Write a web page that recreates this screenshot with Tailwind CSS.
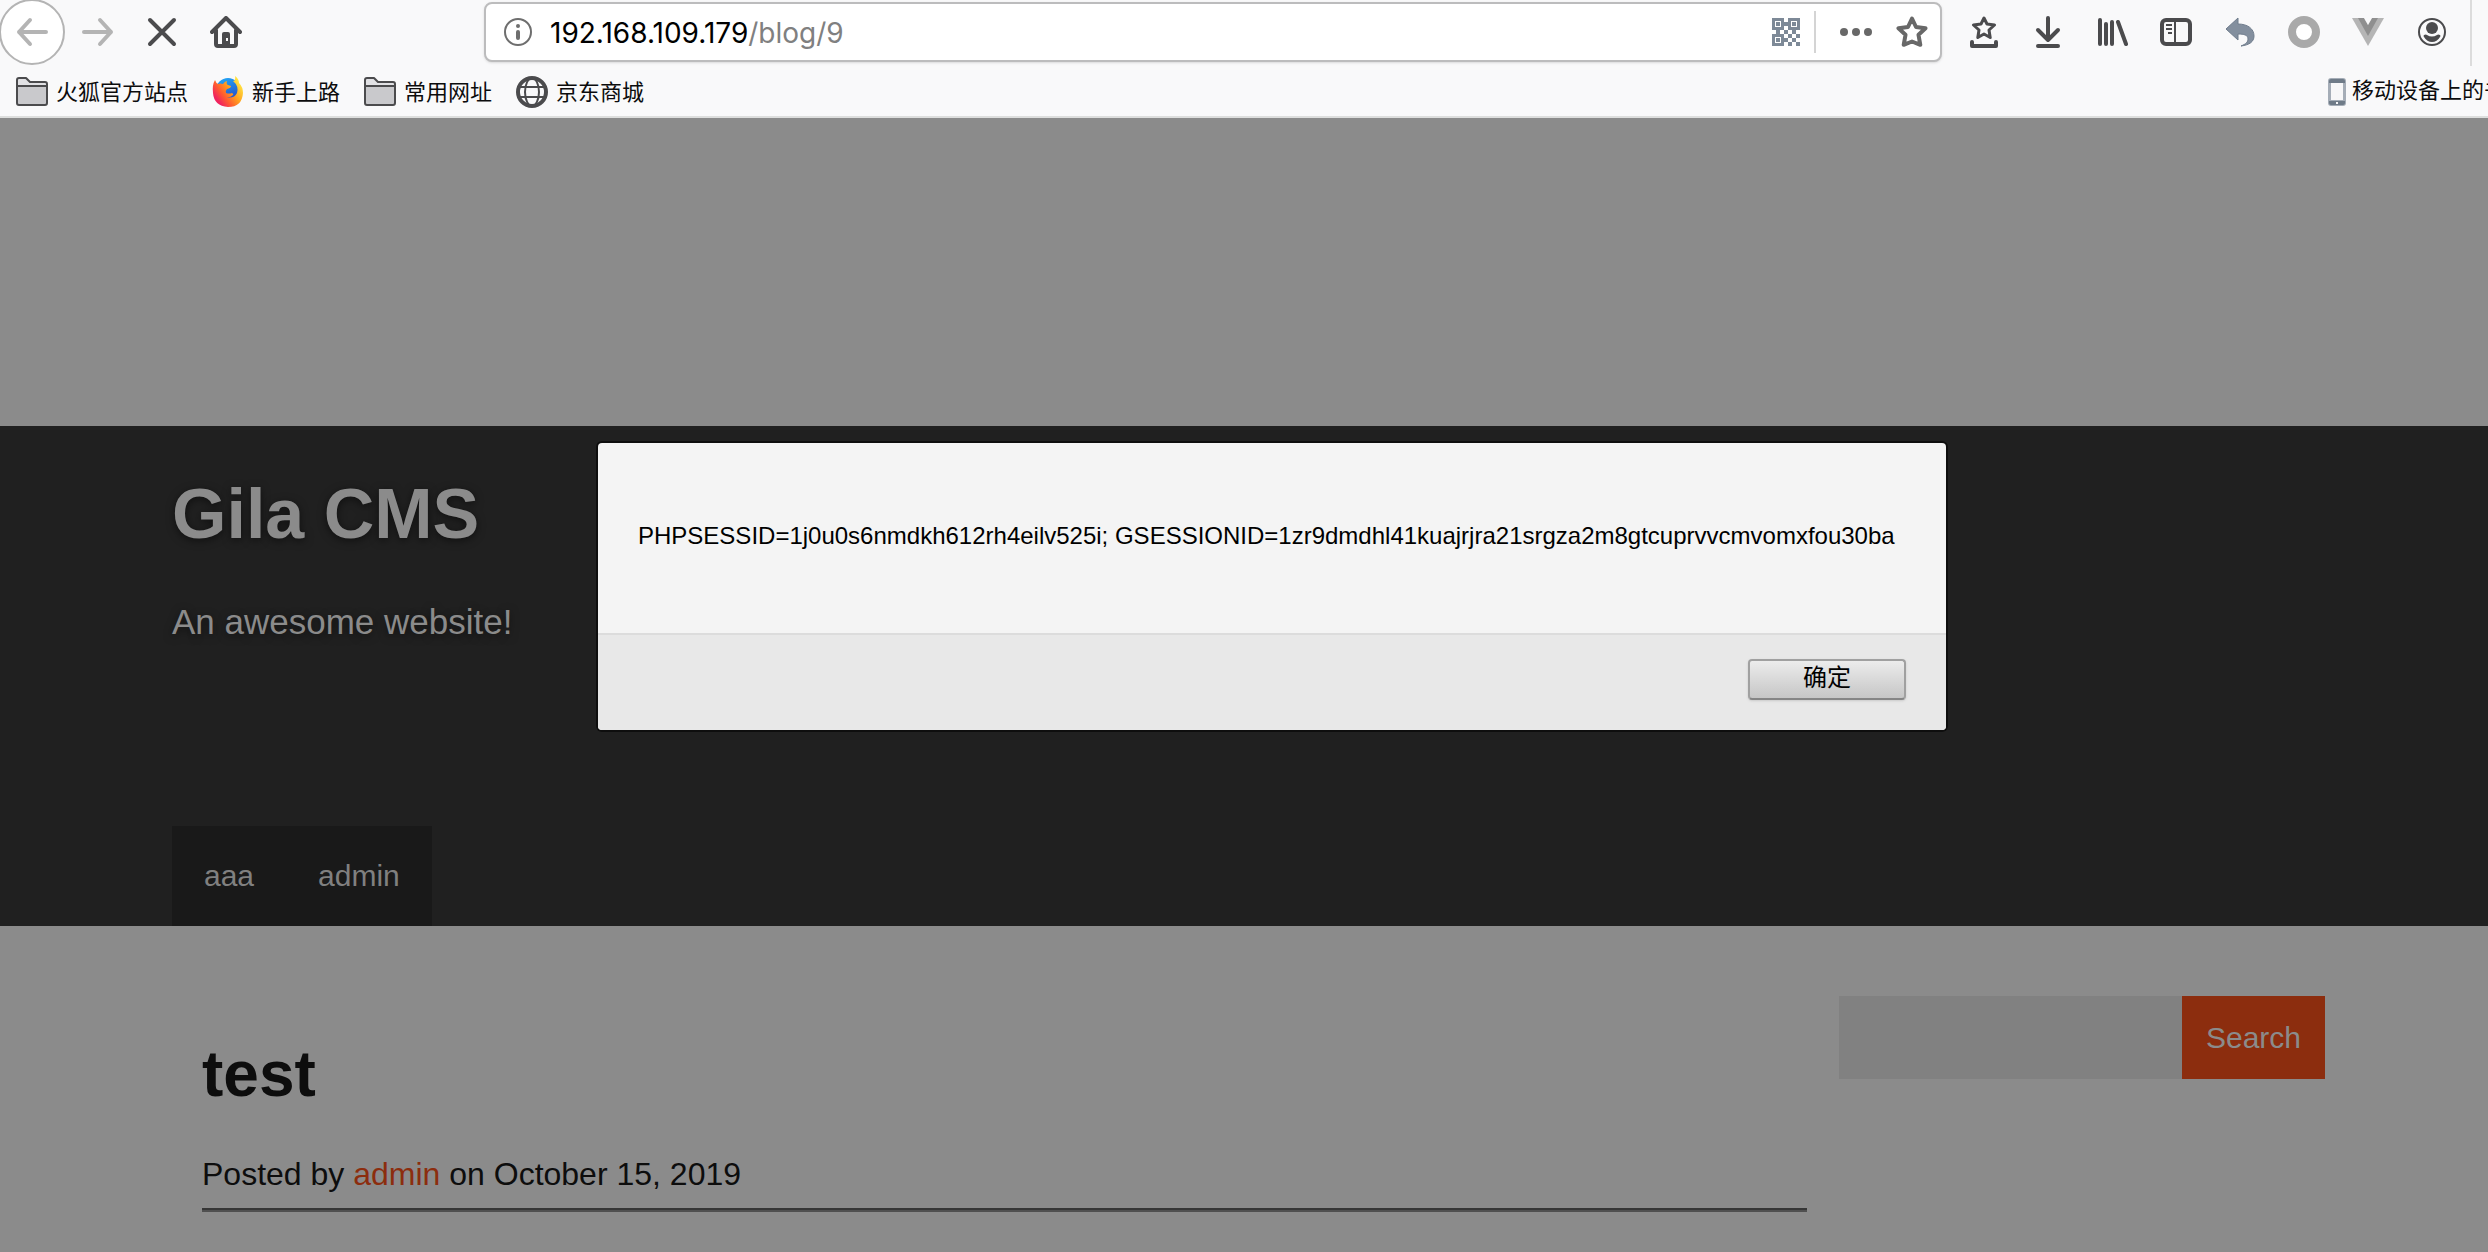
<!DOCTYPE html>
<html lang="zh-CN">
<head>
  <meta charset="UTF-8">
  <title>Gila CMS</title>
  <meta name="viewport" content="width=device-width, initial-scale=1.0">
  <script src="https://cdn.jsdelivr.net/npm/@tailwindcss/browser@4"></script>
</head>
<body class="h-screen flex flex-col overflow-hidden bg-[#8b8b8b] font-['Liberation_Sans','Noto_Sans_CJK_SC',sans-serif]">

  <!-- Browser chrome -->
  <header class="shrink-0 bg-[#f9f9fa] border-b-2 border-[#dddedd] text-[#4b4b4d]">
    <div class="flex items-start h-[66px]">
      <nav class="flex w-[484px] shrink-0">
        <button aria-label="Back" class="size-[66px] -ml-px -mt-px mr-px rounded-full bg-white border-2 border-[#b4b4b4] text-[#b4b4b4] flex items-center justify-center">
          <svg class="size-8" viewBox="0 0 32 32" fill="none" stroke="currentColor" stroke-width="4" stroke-linecap="round" stroke-linejoin="round"><path d="M30 16H3M14 4L3 16l11 12"/></svg>
        </button>
        <button aria-label="Forward" class="size-16 text-[#b4b4b4] flex items-center justify-center">
          <svg class="size-8" viewBox="0 0 32 32" fill="none" stroke="currentColor" stroke-width="4" stroke-linecap="round" stroke-linejoin="round"><path d="M2 16h27M18 4l11 12-11 12"/></svg>
        </button>
        <button aria-label="Stop" class="size-16 flex items-center justify-center">
          <svg class="size-8" viewBox="0 0 32 32" fill="none" stroke="currentColor" stroke-width="4" stroke-linecap="round"><path d="M4 4l24 24M28 4L4 28"/></svg>
        </button>
        <button aria-label="Home" class="size-16 flex items-center justify-center">
          <svg class="size-8" viewBox="0 0 32 32" fill="none" stroke="currentColor" stroke-width="4" stroke-linecap="round" stroke-linejoin="round"><path d="M2 16L16 2l14 14M6 14v14q0 2 2 2h16q2 0 2-2V14"/><path fill="currentColor" stroke="none" d="M12 30V18q0-2 2-2h4q2 0 2 2v12z"/><path fill="#f9f9fa" stroke="none" d="M16 22h2v3h-2z"/></svg>
        </button>
      </nav>

      <div class="flex items-center mt-[2px] h-[60px] w-[1458px] shrink-0 bg-white border-2 border-[#bcbcbd] rounded-lg shadow-sm pl-4 pr-3">
        <svg class="size-8 text-[#6e6e6e]" viewBox="0 0 32 32"><circle cx="16" cy="16" r="13" fill="none" stroke="currentColor" stroke-width="2"/><circle cx="16" cy="10" r="2" fill="currentColor"/><path d="M16 16v6" stroke="currentColor" stroke-width="4" stroke-linecap="round"/></svg>
        <p class="grow pl-4 pt-[2px] text-[28px] leading-8 font-['Inter'] text-[#808080]"><span class="text-black">192.168.109.179</span>/blog/9</p>
        <button aria-label="QR code" class="text-[#7d8997]">
          <svg class="size-7" viewBox="0 0 28 28" fill="currentColor"><path fill-rule="evenodd" d="M0 0h12v12H0zM3 3v6h6V3zM16 0h12v12H16zM19 3v6h6V3zM0 16h12v12H0zM3 19v6h6v-6z"/><path d="M4 4h4v4H4zM20 4h4v4h-4zM4 20h4v4H4zM12 4h4v4h-4zM4 12h4v4H4zM20 12h4v4h-4zM12 12h4v4h-4zM16 16h4v4h-4zM24 16h4v4h-4zM12 20h4v4h-4zM20 20h4v4h-4zM16 24h4v4h-4zM24 24h4v4h-4z"/></svg>
        </button>
        <div class="w-[2px] h-[42px] bg-[#d4d4d4] mx-[14px]"></div>
        <button aria-label="Page actions" class="ml-[10px] text-[#686868]">
          <svg class="size-8" viewBox="0 0 32 32" fill="currentColor"><circle cx="4" cy="16" r="4"/><circle cx="16" cy="16" r="4"/><circle cx="28" cy="16" r="4"/></svg>
        </button>
        <button aria-label="Bookmark" class="ml-6 text-[#686868]">
          <svg class="size-8" viewBox="0 0 32 32" fill="none" stroke="currentColor" stroke-width="4" stroke-linejoin="round"><path d="M16 2.500l4 8.500 9.500 1.200-7 6.600 1.800 10L16 25.500l-8.300 3.300 1.800-10-7-6.600L12 11z"/></svg>
        </button>
      </div>

      <div class="flex ml-[10px] shrink-0">
        <button aria-label="Bookmarks menu" class="size-16 flex items-center justify-center">
          <svg class="size-8" viewBox="0 0 32 32" fill="none" stroke="currentColor" stroke-width="4" stroke-linecap="round" stroke-linejoin="round"><path stroke-width="3" d="M16 2l3 6 7.500 1-5.500 5 1.200 7.500L16 18l-6.200 3.500L11 14 5.500 9 13 8z"/><path d="M4 26v4h24v-4"/></svg>
        </button>
        <button aria-label="Downloads" class="size-16 flex items-center justify-center">
          <svg class="size-8" viewBox="0 0 32 32" fill="none" stroke="currentColor" stroke-width="4" stroke-linecap="round" stroke-linejoin="round"><path d="M16 2v22M6 14l10 10 10-10M6 30h20"/></svg>
        </button>
        <button aria-label="Library" class="size-16 flex items-center justify-center">
          <svg class="size-8" viewBox="0 0 32 32" fill="none" stroke="currentColor" stroke-width="4" stroke-linecap="round"><path d="M4 4v24M10 8v20M16 6v22M22 6l8 22"/></svg>
        </button>
        <button aria-label="Sidebar" class="size-16 flex items-center justify-center">
          <svg class="size-8" viewBox="0 0 32 32" fill="none" stroke="currentColor" stroke-width="4"><rect x="2" y="4" width="28" height="24" rx="4"/><path stroke-width="2" d="M15 4v24M6 9h6M6 13h6M8 17h4"/></svg>
        </button>
        <button aria-label="Undo" class="size-16 flex items-center justify-center">
          <svg class="size-8" viewBox="0 0 32 32"><path fill="#838f9e" stroke="#6f7c8c" d="M2 13L14 2v6c10 0 16 5 16 12 0 6-5 9-13 10 5-2 7-4 7-7 0-4-4-5-10-5v6z"/></svg>
        </button>
        <button aria-label="Record" class="size-16 flex items-center justify-center">
          <svg class="size-8" viewBox="0 0 32 32"><circle cx="16" cy="16" r="12" fill="#fff" stroke="#a9a9a9" stroke-width="8"/></svg>
        </button>
        <button aria-label="Vue" class="size-16 flex items-center justify-center">
          <svg class="size-8" viewBox="0 0 32 32"><path fill="#b5b5b5" d="M0 2h32L16 30z"/><path fill="#8f8f8f" d="M6 2h6l4 7 4-7h6L16 20z"/><path fill="#f9f9fa" d="M12 2h8l-4 7z"/></svg>
        </button>
        <button aria-label="Account" class="size-16 flex items-center justify-center">
          <svg class="size-8" viewBox="0 0 32 32"><circle cx="16" cy="16" r="13" fill="none" stroke="currentColor" stroke-width="2"/><circle cx="16" cy="12" r="6" fill="currentColor"/><path fill="currentColor" d="M8 19q2-1 3 0 5 3 10 0 1-1 3 0 1 1 0 2-3 5-8 5t-8-5q-1-1 0-2z"/></svg>
        </button>
      </div>
      <div class="ml-[6px] w-[2px] h-[66px] bg-[#dcdcdc]"></div>
    </div>

    <!-- Bookmarks bar -->
    <div class="flex items-center h-[50px] pt-[2px] pl-4 gap-6 text-[22px] leading-8 text-[#0c0c0d] whitespace-nowrap">
      <a href="#" class="flex items-center gap-2">
        <svg class="size-8" viewBox="0 0 32 32" fill="#c9c9cc" stroke="#4b4b4d" stroke-width="2" stroke-linejoin="round"><path fill="#e1e1e4" d="M1 11V4q0-2 2-2h7l4 4h15q2 0 2 2v3z"/><path d="M1 10h30v17q0 2-2 2H3q-2 0-2-2z"/></svg>
        <span class="pt-[2px]">火狐官方站点</span>
      </a>
      <a href="#" class="flex items-center gap-2">
        <svg class="size-8" viewBox="0 0 32 32">
          <defs>
            <linearGradient id="fox" x1="0.9" y1="0.1" x2="0.1" y2="0.7"><stop offset="0" stop-color="#fff14a"/><stop offset="0.45" stop-color="#ffa01e"/><stop offset="0.75" stop-color="#ff5b30"/><stop offset="1" stop-color="#f0245e"/></linearGradient>
            <linearGradient id="globe" x1="0.3" y1="0" x2="0.7" y2="1"><stop offset="0" stop-color="#22a5f5"/><stop offset="1" stop-color="#2546c4"/></linearGradient>
          </defs>
          <circle cx="16" cy="14" r="12" fill="url(#globe)"/>
          <path fill="url(#fox)" d="M3 4q1 3 3 4 2-1 5 0 2-3 4-3-1 3 1 4l3 1q0 2-4 3-2 2-1 4 3 1 6 0 2 1 1 2-3 3-7 2 8 2 11-4 2-7-4-12 3 0 2-5 4 3 4 7 4 4 4 10-1 14-15 14Q2 30 1 17 0 9 3 4z"/>
        </svg>
        <span class="pt-[2px]">新手上路</span>
      </a>
      <a href="#" class="flex items-center gap-2">
        <svg class="size-8" viewBox="0 0 32 32" fill="#c9c9cc" stroke="#4b4b4d" stroke-width="2" stroke-linejoin="round"><path fill="#e1e1e4" d="M1 11V4q0-2 2-2h7l4 4h15q2 0 2 2v3z"/><path d="M1 10h30v17q0 2-2 2H3q-2 0-2-2z"/></svg>
        <span class="pt-[2px]">常用网址</span>
      </a>
      <a href="#" class="flex items-center gap-2">
        <svg class="size-8" viewBox="0 0 32 32" fill="none" stroke="#4b4b4d" stroke-width="2"><circle cx="16" cy="16" r="14" stroke-width="4"/><ellipse cx="16" cy="16" rx="7" ry="14"/><path d="M3 11h26M3 21h26"/></svg>
        <span class="pt-[2px]">京东商城</span>
      </a>
      <a href="#" class="flex items-center ml-auto w-[168px] overflow-hidden">
        <svg class="size-8 shrink-0" viewBox="0 0 32 32"><rect x="8" y="2" width="18" height="28" rx="3" fill="#a5adb7"/><path fill="#6f7b88" d="M9 5q0-2 2-2h12q2 0 2 2v2H9zM9 25h16v2q0 2-2 2H11q-2 0-2-2z"/><path fill="#f7f7f8" d="M11 7h12v17H11zM16 26h2v2h-2z"/></svg>
        <span class="pb-[2px]">移动设备上的书签</span>
      </a>
    </div>
  </header>

  <!-- Page -->
  <div class="relative grow">
    <div class="h-[308px]"></div>

    <section class="flex flex-col h-[500px] bg-[#202020] pl-[172px] text-[#8b8b8b]">
      <h1 class="mt-12 text-[70px] leading-[80px] font-bold text-shadow-[0_2px_8px_#0008]">Gila CMS</h1>
      <p class="mt-12 text-[35px] leading-10 text-shadow-[0_2px_8px_#0008]">An awesome website!</p>
      <nav class="mt-auto flex self-start h-[100px] items-center pb-[2px] bg-[#191919] text-[30px] text-[#808080]">
        <a href="#" class="px-8">aaa</a>
        <a href="#" class="px-8">admin</a>
      </nav>
    </section>

    <main class="flex items-start pl-[202px] text-[#0d0d0d]">
      <article class="w-[1605px]">
        <h2 class="mt-28 text-[64px] leading-[72px] font-bold">test</h2>
        <p class="mt-11 text-[32px] leading-10">Posted by <a href="#" class="text-[#8c2d0e]">admin</a> on October 15, 2019</p>
        <hr class="mt-[14px] border-t-2 border-b-2 border-t-[#363636] border-b-[#505050]">
        <p class="mt-[30px] text-[32px] leading-10">test</p>
      </article>
      <form class="flex mt-[70px] ml-8 h-[83px] w-[486px] text-[30px]">
        <input type="search" aria-label="Search" class="grow min-w-0 px-4 bg-[#818181]">
        <button type="submit" class="shrink-0 px-6 bg-[#8c2d0e] text-[#8b8b8b]">Search</button>
      </form>
    </main>

    <!-- Alert -->
    <div class="absolute inset-x-0 top-[325px] flex justify-center pl-14">
      <div role="alertdialog" class="w-[1348px] rounded-sm bg-[#f4f4f4] ring-2 ring-[#0e0e0e] overflow-hidden text-black text-[24px]">
        <p class="h-[190px] pl-10 pt-[77px] leading-8 whitespace-nowrap">PHPSESSID=1j0u0s6nmdkh612rh4eilv525i; GSESSIONID=1zr9dmdhl41kuajrjra21srgza2m8gtcuprvvcmvomxfou30ba</p>
        <div class="flex justify-end h-[97px] pt-6 pr-10 bg-[#e8e8e8] border-t-2 border-[#dcdcdc]">
          <button class="w-[158px] h-[41px] pb-1 flex items-center justify-center rounded-sm border-2 border-[#a0a0a0] border-b-[#858585] bg-linear-to-b from-[#ececec] to-[#c6c6c6] shadow-sm">确定</button>
        </div>
      </div>
    </div>
  </div>

</body>
</html>
